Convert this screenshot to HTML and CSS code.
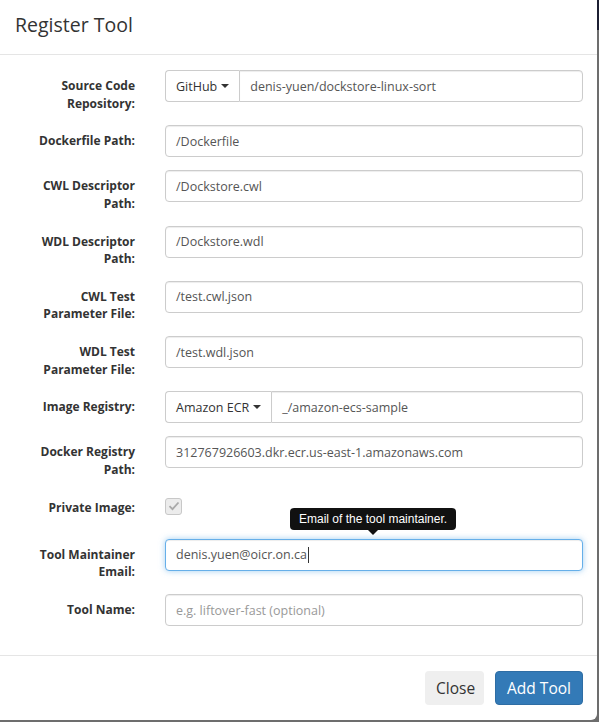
FILE: index.html
```html
<!DOCTYPE html>
<html>
<head>
<meta charset="utf-8">
<link rel="stylesheet" href="styles.css">
</head>
<body>
<div class="modal">
  <div class="modal-header">
    <h4 class="modal-title">Register Tool</h4>
  </div>
  <div class="modal-body">
    <div class="form-group two">
      <label class="control-label">Source Code<br>Repository:</label>
      <div class="input-group">
        <span class="addon">GitHub <span class="caret"></span></span>
        <span class="form-control">denis-yuen/dockstore-linux-sort</span>
      </div>
    </div>
    <div class="form-group">
      <label class="control-label">Dockerfile Path:</label>
      <span class="form-control">/Dockerfile</span>
    </div>
    <div class="form-group two">
      <label class="control-label">CWL Descriptor<br>Path:</label>
      <span class="form-control">/Dockstore.cwl</span>
    </div>
    <div class="form-group two">
      <label class="control-label">WDL Descriptor<br>Path:</label>
      <span class="form-control">/Dockstore.wdl</span>
    </div>
    <div class="form-group two">
      <label class="control-label">CWL Test<br>Parameter File:</label>
      <span class="form-control">/test.cwl.json</span>
    </div>
    <div class="form-group two">
      <label class="control-label">WDL Test<br>Parameter File:</label>
      <span class="form-control">/test.wdl.json</span>
    </div>
    <div class="form-group">
      <label class="control-label">Image Registry:</label>
      <div class="input-group">
        <span class="addon">Amazon ECR <span class="caret"></span></span>
        <span class="form-control">_/amazon-ecs-sample</span>
      </div>
    </div>
    <div class="form-group two">
      <label class="control-label">Docker Registry<br>Path:</label>
      <span class="form-control">312767926603.dkr.ecr.us-east-1.amazonaws.com</span>
    </div>
    <div class="form-group check-row">
      <label class="control-label">Private Image:</label>
      <div class="checkbox">
        <span class="box">
          <svg width="12" height="10" viewBox="0 0 12 10"><path d="M1.5 5.2 L4.5 8.2 L10.5 1.5" fill="none" stroke="#a9a9a9" stroke-width="1.8"/></svg>
        </span>
      </div>
    </div>
    <div class="form-group two">
      <label class="control-label">Tool Maintainer<br>Email:</label>
      <div class="tip-wrap">
        <span class="form-control focus">denis.yuen@oicr.on.ca<span class="cursor"></span></span>
        <div class="tooltip">Email of the tool maintainer.<span class="tip-arrow"></span></div>
      </div>
    </div>
    <div class="form-group last">
      <label class="control-label">Tool Name:</label>
      <span class="form-control placeholder">e.g. liftover-fast (optional)</span>
    </div>
  </div>
  <div class="modal-footer">
    <button class="btn btn-default">Close</button>
    <button class="btn btn-primary">Add Tool</button>
  </div>
</div>
</body>
</html>
```

FILE: styles.css
```css
html, body {
  margin: 0;
  padding: 0;
}
body {
  width: 599px;
  height: 722px;
  overflow: hidden;
  background: linear-gradient(#1c1f33 0, #1c1f33 30px, #6d6d6d 30px, #6d6d6d 100%);
  font-family: "Open Sans", "Noto Sans", sans-serif;
  color: #333;
}
.modal {
  width: 597px;
  height: 720px;
  background: #fff;
  border-radius: 0 0 6px 0;
  box-sizing: border-box;
  display: flex;
  flex-direction: column;
}
.modal-header {
  height: 55px;
  box-sizing: border-box;
  border-bottom: 1px solid #e5e5e5;
  padding: 0 15px;
  display: flex;
  align-items: center;
}
.modal-title {
  margin: 0;
  font-size: 19.5px;
  font-weight: 400;
  color: #333;
  padding-bottom: 5px;
}
.modal-body {
  padding: 15px 14px 15px 15px;
  flex: 1;
}
.form-group {
  display: grid;
  grid-template-columns: 120px 1fr;
  column-gap: 30px;
  margin-bottom: 13px;
  align-items: start;
}
.form-group.two {
  min-height: 42.3px;
}
.form-group.last {
  margin-bottom: 0;
}
.control-label {
  text-align: right;
  font-weight: 700;
  font-size: 12px;
  line-height: 17.5px;
  padding-top: 7px;
  color: #333;
  white-space: nowrap;
}
.form-control {
  display: flex;
  align-items: center;
  height: 32px;
  box-sizing: border-box;
  border: 1px solid #ccc;
  border-radius: 4px;
  padding: 0 10px;
  font-size: 12.5px;
  color: #555;
  background: #fff;
  box-shadow: inset 0 1px 1px rgba(0,0,0,.075);
  white-space: nowrap;
}
.form-control.placeholder {
  color: #999;
}
.form-control.focus {
  border-color: #66afe9;
  box-shadow: inset 0 1px 1px rgba(0,0,0,.075), 0 0 6px rgba(102,175,233,.6);
}
.cursor {
  display: inline-block;
  width: 1px;
  height: 16px;
  background: #333;
  margin-left: 1px;
}
.input-group {
  display: flex;
}
.input-group .addon {
  display: flex;
  align-items: center;
  gap: 4px;
  height: 32px;
  box-sizing: border-box;
  border: 1px solid #ccc;
  border-right: none;
  border-radius: 4px 0 0 4px;
  padding: 0 10px;
  font-size: 12.5px;
  color: #333;
  background: #fff;
  white-space: nowrap;
}
.input-group .form-control {
  flex: 1;
  border-radius: 0 4px 4px 0;
}
.caret {
  display: inline-block;
  width: 0;
  height: 0;
  border-top: 4px solid #333;
  border-left: 4px solid transparent;
  border-right: 4px solid transparent;
}
.check-row {
  min-height: 34px;
}
.checkbox {
  padding-top: 6px;
}
.checkbox .box {
  display: flex;
  align-items: center;
  justify-content: center;
  width: 15px;
  height: 15px;
  border: 1px solid #c8c8c8;
  border-radius: 3px;
  background: #ececec;
}
.tip-wrap {
  position: relative;
}
.tooltip {
  position: absolute;
  left: 125px;
  top: -31px;
  height: 22px;
  box-sizing: border-box;
  padding: 0 9px;
  background: #111;
  color: #fff;
  border-radius: 4px;
  font-family: "Liberation Sans", Arial, sans-serif;
  font-size: 12px;
  line-height: 22px;
  white-space: nowrap;
}
.tip-arrow {
  position: absolute;
  left: 50%;
  bottom: -5px;
  margin-left: -5px;
  width: 0;
  height: 0;
  border-top: 5px solid #111;
  border-left: 5px solid transparent;
  border-right: 5px solid transparent;
}
.modal-footer {
  height: 65px;
  box-sizing: border-box;
  border-top: 1px solid #e5e5e5;
  padding: 0 14px 0 15px;
  display: flex;
  justify-content: flex-end;
  align-items: center;
  gap: 11px;
}
.btn {
  height: 34px;
  box-sizing: border-box;
  border-radius: 4px;
  font-family: "Open Sans", "Noto Sans", sans-serif;
  font-size: 15.5px;
  padding: 0 10px;
  border: 1px solid transparent;
}
.btn-default {
  background: #efefef;
  color: #333;
  width: 59px;
}
.btn-primary {
  background: #337ab7;
  border-color: #2e6da4;
  color: #fff;
  width: 88px;
}
```
